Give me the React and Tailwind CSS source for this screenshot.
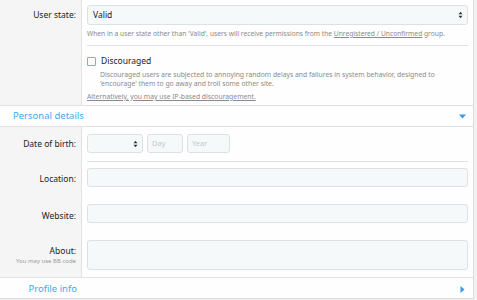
const font = { fontFamily: '"Noto Sans", "Open Sans", sans-serif' };

function Arrows() {
  return (
    <svg width="5" height="8" viewBox="0 0 5 8" className="text-[#333]">
      <path d="M0.5 3.3 L2.5 0.8 L4.5 3.3 Z M0.5 4.7 L2.5 7.2 L4.5 4.7 Z" fill="currentColor" />
    </svg>
  );
}

function Label({ children, sub }) {
  return (
    <div className="text-right pr-[5px] leading-none">
      <div className="text-[8.5px] text-[#222]">{children}</div>
      {sub && <div className="text-[6px] text-[#9a9a9a] mt-[3px]">{sub}</div>}
    </div>
  );
}

const input = 'border border-[#dbe2e5] bg-[#f6f9fa] rounded-[3px]';

export default function App() {
  return (
    <div className="w-[477px] h-[300px] bg-[#f2f2f2] overflow-hidden" style={font}>
      <div className="w-[474px] bg-[#fefefe] border-r border-b border-[#dcdcdc]">
        {/* User state */}
        <div className="flex h-[106px] border-b border-[#e2e2e2]">
          <div className="w-[82px] shrink-0 bg-[#f5f5f5] border-r border-[#e2e2e2] pt-[11px]">
            <Label>User state:</Label>
          </div>
          <div className="flex-1 pl-[5px] pr-[5px] pt-[5px]">
            <div className={`${input} h-[20px] flex items-center justify-between pl-[5px] pr-[4px]`}>
              <span className="text-[8.5px] text-[#222]">Valid</span>
              <Arrows />
            </div>
            <p className="text-[6.7px] text-[#8a8a8a] mt-[4px] leading-[10px]">
              When in a user state other than 'Valid', users will receive permissions from the{' '}
              <span className="underline">Unregistered / Unconfirmed</span> group.
            </p>
            <div className="border-t border-[#e2e2e2] mt-[6px] pt-[9px]">
              <div className="flex items-center gap-[5px]">
                <div className="w-[9px] h-[9px] border border-[#6cb5ef] bg-white rounded-[1px]" />
                <span className="text-[8.5px] text-[#222]">Discouraged</span>
              </div>
              <p className="ml-[13px] text-[6.8px] text-[#8a8a8a] leading-[9px] mt-[2px]">
                Discouraged users are subjected to annoying random delays and failures in system behavior, designed to
                'encourage' them to go away and troll some other site.
              </p>
              <p className="text-[6.8px] text-[#8a8a8a] underline mt-[4px]">
                Alternatively, you may use IP-based discouragement.
              </p>
            </div>
          </div>
        </div>

        {/* Personal details header */}
        <div className="h-[21px] flex items-center justify-between pl-[13px] pr-[7px] pt-[1px] border-b border-[#e2e2e2]">
          <span className="text-[9.5px] text-[#47a7eb]">Personal details</span>
          <svg width="7" height="5" viewBox="0 0 7 5">
            <path d="M0 0.5 H7 L3.5 4.5 Z" fill="#3d9ae8" />
          </svg>
        </div>

        <div className="flex h-[150px]">
          <div className="w-[82px] shrink-0 bg-[#f5f5f5] border-r border-[#e2e2e2] flex flex-col">
            <div className="pt-[13px]"><Label>Date of birth:</Label></div>
            <div className="pt-[26px]"><Label>Location:</Label></div>
            <div className="pt-[29px]"><Label>Website:</Label></div>
            <div className="pt-[26px]"><Label sub="You may use BB code">About:</Label></div>
          </div>
          <div className="flex-1 pl-[5px] pr-[5px]">
            <div className="pt-[7px] pb-[8px] border-b border-[#e2e2e2] flex gap-[4px]">
              <div className={`${input} w-[56px] h-[19px] flex items-center justify-end pr-[4px]`}>
                <Arrows />
              </div>
              <div className={`${input} w-[36px] h-[19px] flex items-center pl-[4px] text-[7.5px] text-[#c4c8ca]`}>Day</div>
              <div className={`${input} w-[43px] h-[19px] flex items-center pl-[4px] text-[7.5px] text-[#c4c8ca]`}>Year</div>
            </div>
            <div className="pt-[6px] flex flex-col gap-[17px]">
              <div className={`${input} h-[19px]`} />
              <div className={`${input} h-[19px]`} />
              <div className={`${input} h-[30px]`} />
            </div>
          </div>
        </div>

        {/* Profile info header */}
        <div className="h-[21px] flex items-center justify-between border-t border-[#e2e2e2] pr-[8px] pt-[2px]">
          <span className="w-[82px] text-right pr-[5px] text-[9.5px] text-[#47a7eb]">Profile info</span>
          <svg width="5" height="7" viewBox="0 0 5 7">
            <path d="M0.5 0 V7 L4.5 3.5 Z" fill="#3d9ae8" />
          </svg>
        </div>
      </div>
    </div>
  );
}
